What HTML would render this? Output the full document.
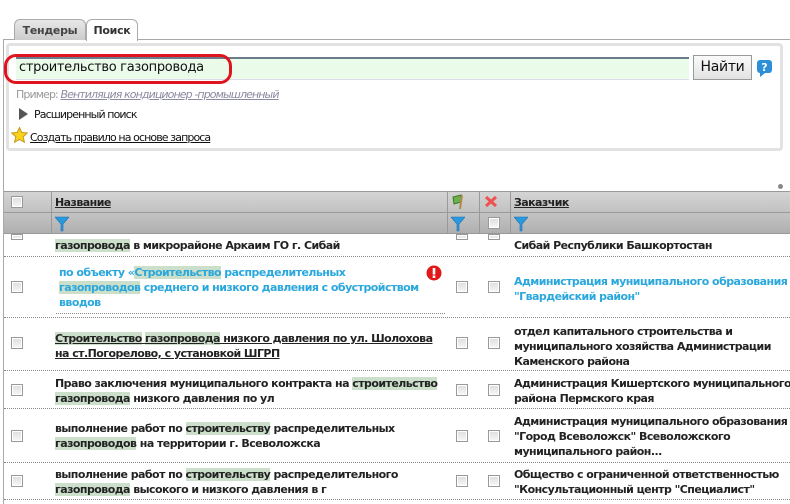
<!DOCTYPE html>
<html><head><meta charset="utf-8">
<style>
*{margin:0;padding:0;box-sizing:border-box}
body{width:790px;height:504px;overflow:hidden;background:#fff;position:relative;font-family:"DejaVu Sans",Verdana,"Liberation Sans",sans-serif;}
.a{position:absolute}
.tab{position:absolute;top:19px;height:21px;border:1px solid #aaa;border-bottom:none;border-radius:6px 6px 0 0;font:bold 11px "DejaVu Sans",sans-serif;color:#444;padding-top:4px;text-align:center;letter-spacing:-0.3px}
.cb{position:absolute;width:12px;height:12px;border:1px solid #999;background:linear-gradient(#ddd,#f8f8f8);box-shadow:inset 0 0 0 1px #fff}
.t{position:absolute;font:bold 11px "DejaVu Sans",Verdana,sans-serif;line-height:15px;color:#222;white-space:nowrap;letter-spacing:-0.55px}
.r{font:11px "DejaVu Sans",sans-serif;letter-spacing:-0.9px}
.h{background:#cbdfcb}
.b{color:#2aa7dc}
.dl{position:absolute;height:0;border-top:1px dotted #888}
.fun{position:absolute;width:14px;height:16px}
</style></head><body>
<div class="a" style="left:3px;top:39px;width:1px;height:465px;background:#aaa"></div>
<div class="a" style="left:3px;top:39px;width:787px;height:1px;background:#aaa"></div>
<div class="tab" style="left:14px;width:72px;background:linear-gradient(#e8e8e8,#ccc)">Тендеры</div>
<div class="tab" style="left:86px;width:52px;background:#fff;color:#333;height:22px">Поиск</div>

<div class="a" style="left:6px;top:43px;width:777px;height:108px;border:3px solid #e2e2e2;border-radius:4px;background:#fff"></div>
<div class="a" style="left:16px;top:57px;width:673px;height:23px;background:#eafbea;border-top:2px solid #6b7b8b;border-bottom:1px solid #dde"></div>
<div class="a" style="left:19px;top:60px;font:13px 'DejaVu Sans',sans-serif;letter-spacing:-0.3px;color:#111">строительство газопровода</div>
<div class="a" style="left:4px;top:54px;width:228px;height:30px;border:3px solid #e0141e;border-radius:12px"></div>
<div class="a" style="left:693px;top:55px;width:59px;height:25px;border:1px solid #999;background:linear-gradient(#fafafa,#e2e2e2);font:14px 'DejaVu Sans',sans-serif;text-align:center;padding-top:3px;color:#111;letter-spacing:-0.3px">Найти</div>
<svg class="a" style="left:756px;top:59px" width="17" height="19" viewBox="0 0 17 19"><rect x="1" y="1" width="15" height="13" rx="3" fill="#2d8fd8"/><path d="M4 13 L4 18 L9 14Z" fill="#2d8fd8"/><text x="8.5" y="12" font-size="11" font-weight="bold" fill="#fff" text-anchor="middle" font-family="DejaVu Sans">?</text></svg>
<div class="a r" style="left:16px;top:88px;color:#999">Пример: <i style="text-decoration:underline;color:#8a8aa0">Вентиляция кондиционер -промышленный</i></div>
<svg class="a" style="left:19px;top:108px" width="10" height="12"><path d="M0 0 L9 6 L0 12Z" fill="#555"/></svg>
<div class="a r" style="left:34px;top:108px;color:#111">Расширенный поиск</div>
<svg class="a" style="left:11px;top:127px" width="17" height="16" viewBox="0 0 17 16"><path d="M8.5 0.5 L10.8 5.5 L16.3 6 L12.2 9.7 L13.4 15.2 L8.5 12.4 L3.6 15.2 L4.8 9.7 L0.7 6 L6.2 5.5Z" fill="#f8d21c" stroke="#c9981a"/></svg>
<div class="a r" style="left:30px;top:131px;color:#111;text-decoration:underline">Создать правило на основе запроса</div>

<div class="a" style="left:778px;top:184px;width:5px;height:5px;border-radius:50%;background:#888"></div>
<div class="a" style="left:4px;top:191px;width:786px;height:22px;background:linear-gradient(#d4d4d4,#c2c2c2);border-top:1px solid #999;border-bottom:1px solid #999"></div>
<div class="a" style="left:4px;top:213px;width:786px;height:21px;background:linear-gradient(#c4c4c4,#b0b0b0);border-bottom:1px solid #999"></div>
<div class="a" style="left:51px;top:191px;width:1px;height:43px;background:#999"></div>
<div class="a" style="left:447px;top:191px;width:1px;height:43px;background:#999"></div>
<div class="a" style="left:479px;top:191px;width:1px;height:43px;background:#999"></div>
<div class="a" style="left:510px;top:191px;width:1px;height:43px;background:#999"></div>
<div class="cb" style="left:11px;top:196px"></div>
<div class="t" style="left:55px;top:195px;text-decoration:underline">Название</div>
<div class="t" style="left:514px;top:195px;text-decoration:underline">Заказчик</div>
<svg class="a" style="left:451px;top:194px" width="16" height="16"><path d="M2 3 L10 1 L10 8 L3 10Z" fill="#6cb04a" stroke="#3c7a2a"/><path d="M11 1 L9 15" stroke="#b08a4a" stroke-width="2"/></svg>
<svg class="a" style="left:484px;top:195px" width="14" height="13"><path d="M2 2 L12 11 M12 2 L2 11" stroke="#f05050" stroke-width="3"/></svg>
<svg class="fun" style="left:55px;top:216px" viewBox="0 0 14 16"><path d="M0 1 L14 1 L8 8 L8 15 L6 15 L6 8Z" fill="#2a9ae0" stroke="#1a6fb0" stroke-width=".6"/></svg>
<svg class="fun" style="left:451px;top:216px" viewBox="0 0 14 16"><path d="M0 1 L14 1 L8 8 L8 15 L6 15 L6 8Z" fill="#2a9ae0" stroke="#1a6fb0" stroke-width=".6"/></svg>
<svg class="fun" style="left:514px;top:216px" viewBox="0 0 14 16"><path d="M0 1 L14 1 L8 8 L8 15 L6 15 L6 8Z" fill="#2a9ae0" stroke="#1a6fb0" stroke-width=".6"/></svg>
<div class="cb" style="left:488px;top:217px"></div>

<div class="cb" style="left:11px;top:234px;height:6px"></div>
<div class="cb" style="left:456px;top:234px;height:6px"></div>
<div class="cb" style="left:488px;top:234px;height:6px"></div>
<div class="t" style="left:55px;top:238px"><span class="h">газопровода</span> в микрорайоне Аркаим ГО г. Сибай</div>
<div class="t" style="left:514px;top:238px">Сибай Республики Башкортостан</div>
<div class="dl" style="left:4px;top:256px;width:786px"></div>
<div class="cb" style="left:11px;top:281px"></div><div class="cb" style="left:456px;top:281px"></div><div class="cb" style="left:488px;top:281px"></div>
<div class="t b" style="left:59px;top:265px">по объекту «<span class="h">Строительство</span> распределительных<br><span class="h">газопроводов</span> среднего и низкого давления с обустройством<br>вводов</div>
<svg class="a" style="left:426px;top:265px" width="16" height="16"><circle cx="8" cy="8" r="7.5" fill="#e01818"/><rect x="6.7" y="3" width="2.6" height="6.5" fill="#fff"/><rect x="6.7" y="10.5" width="2.6" height="2.5" fill="#fff"/></svg>
<div class="t b" style="left:514px;top:274px">Администрация муниципального образования<br>"Гвардейский район"</div>
<div class="dl" style="left:56px;top:313px;width:389px"></div>
<div class="dl" style="left:4px;top:317px;width:786px"></div>
<div class="cb" style="left:11px;top:337px"></div><div class="cb" style="left:456px;top:337px"></div><div class="cb" style="left:488px;top:337px"></div>
<div class="t" style="left:55px;top:331px;text-decoration:underline"><span class="h">Строительство</span> <span class="h">газопровода</span> низкого давления по ул. Шолохова<br>на ст.Погорелово, с установкой ШГРП</div>
<div class="t" style="left:514px;top:324px">отдел капитального строительства и<br>муниципального хозяйства Администрации<br>Каменского района</div>
<div class="dl" style="left:4px;top:370px;width:786px"></div>
<div class="cb" style="left:11px;top:384px"></div><div class="cb" style="left:456px;top:384px"></div><div class="cb" style="left:488px;top:384px"></div>
<div class="t" style="left:55px;top:376px">Право заключения муниципального контракта на <span class="h">строительство</span><br><span class="h">газопровода</span> низкого давления по ул</div>
<div class="t" style="left:514px;top:376px">Администрация Кишертского муниципального<br>района Пермского края</div>
<div class="dl" style="left:4px;top:408px;width:786px"></div>
<div class="cb" style="left:11px;top:430px"></div><div class="cb" style="left:456px;top:430px"></div><div class="cb" style="left:488px;top:430px"></div>
<div class="t" style="left:55px;top:421px">выполнение работ по <span class="h">строительству</span> распределительных<br><span class="h">газопроводов</span> на территории г. Всеволожска</div>
<div class="t" style="left:514px;top:414px">Администрация муниципального образования<br>"Город Всеволожск" Всеволожского<br>муниципального район...</div>
<div class="dl" style="left:4px;top:462px;width:786px"></div>
<div class="cb" style="left:11px;top:475px"></div><div class="cb" style="left:456px;top:475px"></div><div class="cb" style="left:488px;top:475px"></div>
<div class="t" style="left:55px;top:467px">выполнение работ по <span class="h">строительству</span> распределительного<br><span class="h">газопровода</span> высокого и низкого давления в г</div>
<div class="t" style="left:514px;top:467px">Общество с ограниченной ответственностью<br>"Консультационный центр "Специалист"</div>
<div class="dl" style="left:4px;top:499px;width:786px"></div>
</body></html>
